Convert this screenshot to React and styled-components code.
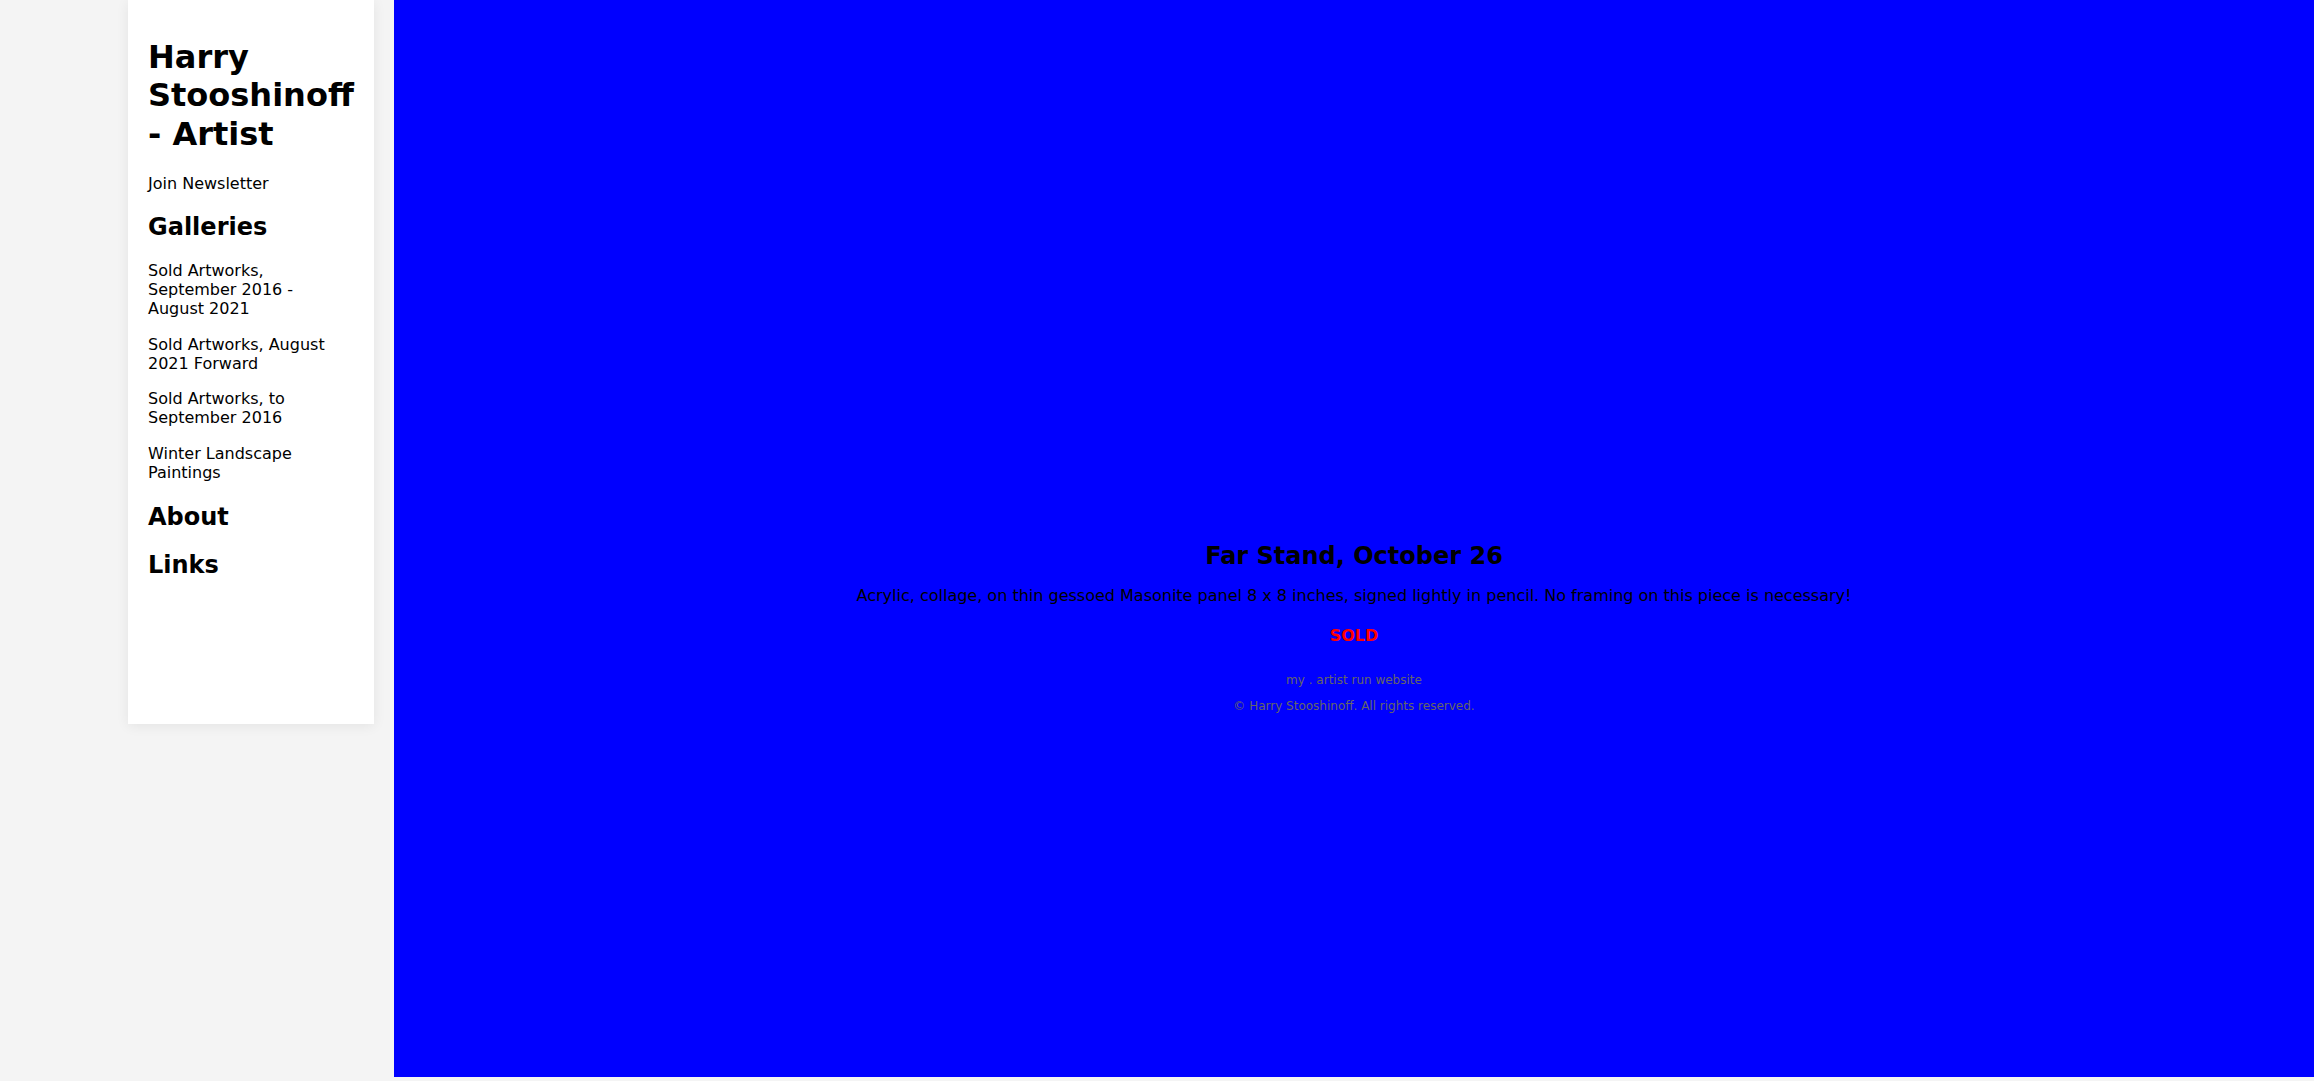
import styled, { createGlobalStyle } from "styled-components";

const GlobalStyle = createGlobalStyle`
  html, body {
    margin: 0;
    padding: 0;
    background: #f4f4f4;
    font-family: "DejaVu Sans", "Liberation Sans", sans-serif;
    color: #000;
  }
`;

const Page = styled.div`
  display: flex;
  align-items: flex-start;
  gap: 20px;
  padding-left: 128px;
`;

const Sidebar = styled.aside`
  box-sizing: border-box;
  width: 246px;
  min-height: 724px;
  flex-shrink: 0;
  padding: 16.5px 20px;
  background: #fff;
  box-shadow: 0 2px 12px rgba(0, 0, 0, 0.07);
`;

const SiteTitle = styled.h1`
  font-size: 32px;
  line-height: 1.2;
  font-weight: 700;
  margin: 21.4px 0;
`;

const NavLink = styled.a`
  display: block;
  font-size: 16px;
  line-height: normal;
  color: #000;
  text-decoration: none;
  margin: ${({ $tight }) => ($tight ? "16.5px 0" : "0")};
`;

const SectionTitle = styled.h2`
  font-size: 24px;
  font-weight: 700;
  line-height: normal;
  margin: 20px 0;
`;

const GalleryList = styled.div`
  margin: 20px 0 21.5px;
`;

const Main = styled.main`
  flex: 1;
  box-sizing: border-box;
  height: calc(100vh - 4px);
  padding-top: 522px;
  background: #0000ff;
  text-align: center;
`;

const ArtTitle = styled.h2`
  font-size: 24px;
  font-weight: 700;
  line-height: normal;
  margin: 20px 0 16px;
`;

const ArtText = styled.p`
  font-size: 16px;
  line-height: normal;
  margin: 0;
`;

const Status = styled.h4`
  font-size: 16px;
  font-weight: 700;
  line-height: normal;
  color: #ff0000;
  margin: 20.5px 0 0;
`;

const Footer = styled.footer`
  display: flex;
  flex-direction: column;
  gap: 12px;
  margin-top: 28px;
  font-size: 12px;
  line-height: normal;
  color: #666;
`;

const galleries = [
  "Sold Artworks, September 2016 - August 2021",
  "Sold Artworks, August 2021 Forward",
  "Sold Artworks, to September 2016",
  "Winter Landscape Paintings",
];

export default function App() {
  return (
    <>
      <GlobalStyle />
      <Page>
        <Sidebar>
          <SiteTitle>Harry Stooshinoff - Artist</SiteTitle>
          <NavLink href="#">Join Newsletter</NavLink>
          <SectionTitle>Galleries</SectionTitle>
          <GalleryList>
            {galleries.map((g, i) => (
              <NavLink key={g} href="#" $tight={i > 0 && i < galleries.length - 1}>
                {g}
              </NavLink>
            ))}
          </GalleryList>
          <SectionTitle>About</SectionTitle>
          <SectionTitle>Links</SectionTitle>
        </Sidebar>
        <Main>
          <ArtTitle>Far Stand, October 26</ArtTitle>
          <ArtText>
            Acrylic, collage, on thin gessoed Masonite panel 8 x 8 inches, signed lightly in pencil. No framing on this piece is necessary!
          </ArtText>
          <Status>SOLD</Status>
          <Footer>
            <div>my . artist run website</div>
            <div>© Harry Stooshinoff. All rights reserved.</div>
          </Footer>
        </Main>
      </Page>
    </>
  );
}
